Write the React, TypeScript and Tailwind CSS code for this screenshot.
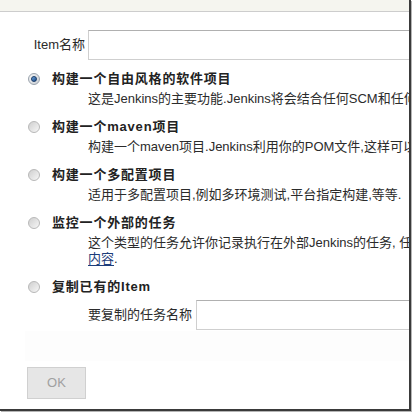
import React from "react";

type Option = {
  title: string;
  desc?: React.ReactNode[];
  selected?: boolean;
};

const options: Option[] = [
  {
    title: "构建一个自由风格的软件项目",
    selected: true,
    desc: ["这是Jenkins的主要功能.Jenkins将会结合任何SCM和任何构建系统来构建你的项目, 甚至可以构建软件以外的系统."],
  },
  {
    title: "构建一个maven项目",
    desc: ["构建一个maven项目.Jenkins利用你的POM文件,这样可以大大减轻构建配置."],
  },
  {
    title: "构建一个多配置项目",
    desc: ["适用于多配置项目,例如多环境测试,平台指定构建,等等."],
  },
  {
    title: "监控一个外部的任务",
    desc: [
      "这个类型的任务允许你记录执行在外部Jenkins的任务, 任务可能运行在远程机器上.这被设计为使用",
      <>
        <a className="text-[#1d3d7a] underline underline-offset-2">内容</a>.
      </>,
    ],
  },
];

const Radio = ({ selected }: { selected?: boolean }) =>
  selected ? (
    <span className="w-[12px] h-[12px] rounded-full border border-[#9aa3ad] bg-gradient-to-br from-[#f4f4f4] to-[#c9ced4] flex items-center justify-center shrink-0">
      <span className="w-[6px] h-[6px] rounded-full bg-gradient-to-br from-[#6fa6e0] to-[#1b4a86] border border-[#173a66]" />
    </span>
  ) : (
    <span className="w-[12px] h-[12px] rounded-full border border-[#b8b8b8] bg-gradient-to-br from-[#cfcfcf] to-[#f7f7f7] shrink-0" />
  );

const Input = () => (
  <div className="h-[30px] w-[420px] shrink-0 bg-white border border-[#cfcfcf] border-t-[#b0b0b0]" />
);

export default function App() {
  return (
    <div className="w-[413px] h-[413px] bg-white overflow-hidden font-['Liberation_Sans','Noto_Sans_CJK_SC',sans-serif] text-[13px] text-[#2b2b2b]">
      <div className="w-[411px] h-[411px] border-r-2 border-b-2 border-[#3a3a3a] shadow-[1px_1px_0_#b5b5b5] overflow-hidden bg-white">
        <div className="h-[12px] bg-[#f5f5ef] border-b border-[#cdcdcd]" />

        <div className="pt-[18px] flex items-center">
          <span className="w-[88px] pr-[3px] text-right shrink-0">Item名称</span>
          <Input />
        </div>

        <div className="mt-[7px]">
          {options.map((o) => (
            <div key={o.title} className="pb-[8px]">
              <div className="h-[24px] flex items-center pl-[28px]">
                <Radio selected={o.selected} />
                <span className="ml-[12px] font-bold text-[#222] tracking-[0.8px]">{o.title}</span>
              </div>
              {o.desc?.map((line, i) => (
                <div key={i} className="pl-[88px] leading-[16px] whitespace-nowrap">
                  {line}
                </div>
              ))}
            </div>
          ))}

          <div className="h-[24px] flex items-center pl-[28px]">
            <Radio />
            <span className="ml-[12px] font-bold text-[#222] tracking-[0.8px]">复制已有的Item</span>
          </div>
          <div className="mt-[1px] flex items-center pl-[88px]">
            <span className="shrink-0">要复制的任务名称</span>
            <span className="ml-[4px]">
              <Input />
            </span>
          </div>
        </div>

        <div className="ml-[25px] mt-[1px] h-[30px] bg-[#fdfdfd]" />

        <div className="mt-[6px] pl-[27px]">
          <button className="w-[59px] h-[32px] bg-[#e6e6e6] border border-[#d0d0d0] text-[#a0a0a0] text-[13px]">
            OK
          </button>
        </div>
      </div>
    </div>
  );
}
